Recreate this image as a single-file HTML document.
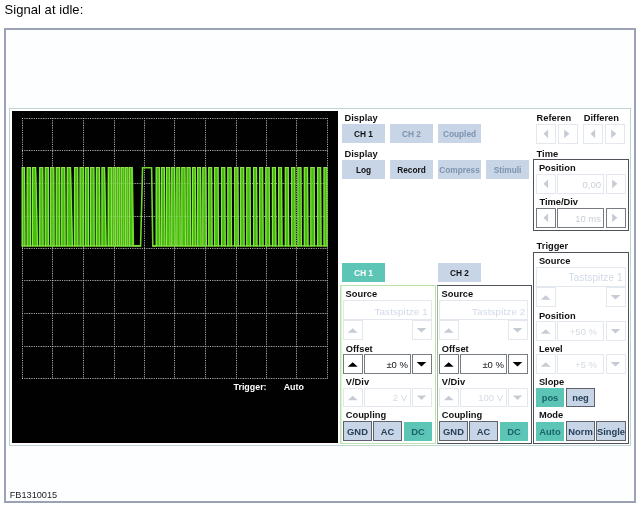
<!DOCTYPE html>
<html><head><meta charset='utf-8'><title>Signal at idle</title>
<style>
html,body{margin:0;padding:0;background:#fff;}
body{width:641px;height:507px;position:relative;overflow:hidden;font-family:"Liberation Sans",sans-serif;}
.a{position:absolute;box-sizing:border-box;}
.t{position:absolute;white-space:nowrap;line-height:1;}
.btn{position:absolute;box-sizing:border-box;font-weight:bold;text-align:center;white-space:nowrap;display:flex;align-items:center;justify-content:center;line-height:1;}
.lt{background:#c7d5e7;}
.teal{background:#5cc5b5;}
.bd{border:1px solid #5d626b;}
.bl{border:1px solid #e3e7ee;background:#fff;}
.bdk{border-color:#777b82;}
.val{position:absolute;box-sizing:border-box;font-weight:bold;text-align:right;white-space:nowrap;}
</style></head>
<body>
<div id='w' style='position:absolute;left:0;top:0;width:641px;height:507px;opacity:0.999;'>
<div class="t" style="left:4.5px;top:3.19px;font-size:13px;color:#000;font-weight:normal;letter-spacing:0.05px;">Signal at idle:</div>
<div class="a " style="left:4px;top:28px;width:632px;height:475px;border:2px solid #9ba2b4;background:#fcfeff;"></div>
<div class="t" style="left:9.7px;top:491.27px;font-size:9.2px;color:#222;font-weight:normal;">FB1310015</div>
<div class="a " style="left:9px;top:108px;width:622px;height:338px;border:1px solid #c2d3d3;background:#fff;"></div>
<div class="a " style="left:12px;top:111px;width:326px;height:332px;background:#000;"></div>
<svg class="a" style="left:0;top:0" width="641" height="507" viewBox="0 0 641 507"><path d="M22.5 118.0 V379.0 M52.5 118.0 V379.0 M83.5 118.0 V379.0 M114.5 118.0 V379.0 M144.5 118.0 V379.0 M174.5 118.0 V379.0 M205.5 118.0 V379.0 M236.5 118.0 V379.0 M266.5 118.0 V379.0 M296.5 118.0 V379.0 M327.5 118.0 V379.0 M22.0 118.5 H328.0 M22.0 150.5 H328.0 M22.0 183.5 H328.0 M22.0 216.5 H328.0 M22.0 248.5 H328.0 M22.0 280.5 H328.0 M22.0 313.5 H328.0 M22.0 346.5 H328.0 M22.0 378.5 H328.0" stroke="#a6a6a6" stroke-width="1" stroke-dasharray="1 1.35" fill="none"/><defs><linearGradient id="ug" x1="0" y1="0" x2="0" y2="1"><stop offset="0" stop-color="#000"/><stop offset="0.12" stop-color="#031000"/><stop offset="0.45" stop-color="#082c00"/><stop offset="1" stop-color="#0b3800"/></linearGradient></defs><path d="M21.7 167.0 H132.2 V246.6 H21.7 Z M155.7 167.0 H204 V246.6 H155.7 Z" fill="url(#ug)"/><path d="M21.7,246.6 L21.7,167.0 L24.9,167.0 L25.45,246.6 Z M26.7,246.6 L26.7,167.0 L31.0,167.0 L31.0,246.6 Z M32.0,246.6 L32.0,167.0 L36.1,167.0 L37.95,246.6 Z M39.2,246.6 L39.2,167.0 L43.2,167.0 L43.55,246.6 Z M44.8,246.6 L44.8,167.0 L48.8,167.0 L48.85,246.6 Z M50.1,246.6 L50.1,167.0 L54.2,167.0 L54.55,246.6 Z M55.8,246.6 L55.8,167.0 L60.1,167.0 L60.1,246.6 Z M61.2,246.6 L61.2,167.0 L65.1,167.0 L65.55,246.6 Z M66.8,246.6 L66.8,167.0 L71.0,167.0 L72.85,246.6 Z M74.1,246.6 L74.1,167.0 L78.1,167.0 L78.35,246.6 Z M79.6,246.6 L79.6,167.0 L83.7,167.0 L83.7,246.6 Z M84.9,246.6 L84.9,167.0 L88.9,167.0 L88.9,246.6 Z M90.0,246.6 L90.0,167.0 L94.3,167.0 L94.65,246.6 Z M95.9,246.6 L95.9,167.0 L99.9,167.0 L100.25,246.6 Z M101.5,246.6 L101.5,167.0 L105.0,167.0 L106.55,246.6 Z M107.8,246.6 L107.8,167.0 L112.0,167.0 L112.0,246.6 Z M112.6,246.6 L112.6,167.0 L116.1,167.0 L116.1,246.6 Z M116.7,246.6 L116.7,167.0 L120.2,167.0 L120.2,246.6 Z M120.8,246.6 L120.8,167.0 L124.4,167.0 L124.4,246.6 Z M125.0,246.6 L125.0,167.0 L128.3,167.0 L128.3,246.6 Z M128.9,246.6 L128.9,167.0 L132.2,167.0 L133.4,246.6 Z M155.7,246.6 L155.7,167.0 L159.8,167.0 L160.3,246.6 Z M160.9,246.6 L160.9,167.0 L164.8,167.0 L165.4,246.6 Z M166.0,246.6 L166.0,167.0 L170.1,167.0 L170.6,246.6 Z M171.2,246.6 L171.2,167.0 L175.1,167.0 L175.7,246.6 Z M176.3,246.6 L176.3,167.0 L180.1,167.0 L180.7,246.6 Z M181.3,246.6 L181.3,167.0 L185.4,167.0 L186.0,246.6 Z M186.6,246.6 L186.6,167.0 L190.6,167.0 L191.2,246.6 Z M192.0,246.6 L192.0,167.0 L195.7,167.0 L196.3,246.6 Z M197.1,246.6 L197.1,167.0 L201.0,167.0 L201.6,246.6 Z M202.3,246.6 L202.3,167.0 L206.3,167.0 L206.9,246.6 Z M208.2,246.6 L208.2,167.0 L212.1,167.0 L212.6,246.6 Z M214.1,246.6 L214.1,167.0 L218.5,167.0 L219.0,246.6 Z M221.0,246.6 L221.0,167.0 L225.2,167.0 L225.7,246.6 Z M227.3,246.6 L227.3,167.0 L231.6,167.0 L232.1,246.6 Z M234.1,246.6 L234.1,167.0 L238.3,167.0 L238.8,246.6 Z M240.1,246.6 L240.1,167.0 L244.1,167.0 L244.6,246.6 Z M246.2,246.6 L246.2,167.0 L250.5,167.0 L251.0,246.6 Z M253.0,246.6 L253.0,167.0 L257.0,167.0 L257.5,246.6 Z M259.1,246.6 L259.1,167.0 L263.1,167.0 L263.6,246.6 Z M265.3,246.6 L265.3,167.0 L269.6,167.0 L270.1,246.6 Z M271.9,246.6 L271.9,167.0 L275.9,167.0 L276.4,246.6 Z M278.1,246.6 L278.1,167.0 L282.0,167.0 L282.5,246.6 Z M284.8,246.6 L284.8,167.0 L288.7,167.0 L289.2,246.6 Z M291.1,246.6 L291.1,167.0 L295.2,167.0 L295.7,246.6 Z M297.4,246.6 L297.4,167.0 L301.4,167.0 L301.9,246.6 Z M303.8,246.6 L303.8,167.0 L308.0,167.0 L308.5,246.6 Z M310.3,246.6 L310.3,167.0 L314.6,167.0 L315.1,246.6 Z M317.1,246.6 L317.1,167.0 L321.1,167.0 L321.6,246.6 Z M323.5,246.6 L323.5,167.0 L327.3,167.0 L327.5,246.6 Z" fill="#40c00c"/><path d="M22.2 246.6 V167.5 H24.5 L25.0 246.6 M27.2 246.6 V167.5 H30.6 L30.55 246.6 M32.5 246.6 V167.5 H35.7 L37.5 246.6 M39.7 246.6 V167.5 H42.800000000000004 L43.1 246.6 M45.3 246.6 V167.5 H48.4 L48.4 246.6 M50.6 246.6 V167.5 H53.800000000000004 L54.1 246.6 M56.3 246.6 V167.5 H59.7 L59.65 246.6 M61.7 246.6 V167.5 H64.69999999999999 L65.1 246.6 M67.3 246.6 V167.5 H70.6 L72.4 246.6 M74.6 246.6 V167.5 H77.69999999999999 L77.9 246.6 M80.1 246.6 V167.5 H83.3 L83.25 246.6 M85.4 246.6 V167.5 H88.5 L88.45 246.6 M90.5 246.6 V167.5 H93.89999999999999 L94.2 246.6 M96.4 246.6 V167.5 H99.5 L99.8 246.6 M102.0 246.6 V167.5 H104.6 L106.1 246.6 M108.3 246.6 V167.5 H111.6 L111.55 246.6 M113.1 246.6 V167.5 H115.69999999999999 L115.65 246.6 M117.2 246.6 V167.5 H119.8 L119.75 246.6 M121.3 246.6 V167.5 H124.0 L123.95 246.6 M125.5 246.6 V167.5 H127.9 L127.85 246.6 M129.4 246.6 V167.5 H131.79999999999998 L132.95 246.6 M156.2 246.6 V167.5 H159.4 L159.85 246.6 M161.4 246.6 V167.5 H164.4 L164.95 246.6 M166.5 246.6 V167.5 H169.7 L170.15 246.6 M171.7 246.6 V167.5 H174.7 L175.25 246.6 M176.8 246.6 V167.5 H179.7 L180.25 246.6 M181.8 246.6 V167.5 H185.0 L185.55 246.6 M187.1 246.6 V167.5 H190.2 L190.75 246.6 M192.5 246.6 V167.5 H195.29999999999998 L195.85 246.6 M197.6 246.6 V167.5 H200.6 L201.15 246.6 M202.8 246.6 V167.5 H205.9 L206.45 246.6 M208.7 246.6 V167.5 H211.7 L212.15 246.6 M214.6 246.6 V167.5 H218.1 L218.55 246.6 M221.5 246.6 V167.5 H224.79999999999998 L225.25 246.6 M227.8 246.6 V167.5 H231.2 L231.65 246.6 M234.6 246.6 V167.5 H237.9 L238.35 246.6 M240.6 246.6 V167.5 H243.7 L244.15 246.6 M246.7 246.6 V167.5 H250.1 L250.55 246.6 M253.5 246.6 V167.5 H256.6 L257.05 246.6 M259.6 246.6 V167.5 H262.70000000000005 L263.15 246.6 M265.8 246.6 V167.5 H269.20000000000005 L269.65 246.6 M272.4 246.6 V167.5 H275.5 L275.95 246.6 M278.6 246.6 V167.5 H281.6 L282.05 246.6 M285.3 246.6 V167.5 H288.3 L288.75 246.6 M291.6 246.6 V167.5 H294.8 L295.25 246.6 M297.9 246.6 V167.5 H301.0 L301.45 246.6 M304.3 246.6 V167.5 H307.6 L308.05 246.6 M310.8 246.6 V167.5 H314.20000000000005 L314.65 246.6 M317.6 246.6 V167.5 H320.70000000000005 L321.15 246.6 M324.0 246.6 V167.5 H326.90000000000003 L327.05 246.6" stroke="#9de455" stroke-width="1.1" fill="none" opacity="0.9"/><path d="M132.2 167.0 L133.4 245.9 H140.6 L142.6 167.7 H151.6 L152.8 245.9 H156" stroke="#6ed62c" stroke-width="1.6" fill="none"/><path d="M21.7 245.9 H141 M152.4 245.9 H327.5" stroke="#86de40" stroke-width="1.4" fill="none"/><path d="M22.5 118.0 V379.0 M52.5 118.0 V379.0 M83.5 118.0 V379.0 M114.5 118.0 V379.0 M144.5 118.0 V379.0 M174.5 118.0 V379.0 M205.5 118.0 V379.0 M236.5 118.0 V379.0 M266.5 118.0 V379.0 M296.5 118.0 V379.0 M327.5 118.0 V379.0 M22.0 118.5 H328.0 M22.0 150.5 H328.0 M22.0 183.5 H328.0 M22.0 216.5 H328.0 M22.0 248.5 H328.0 M22.0 280.5 H328.0 M22.0 313.5 H328.0 M22.0 346.5 H328.0 M22.0 378.5 H328.0" stroke="#d8ffd0" stroke-width="1" stroke-dasharray="1 1" fill="none" opacity="0.22"/></svg>
<div class="t" style="left:233.5px;top:383.32px;font-size:8.9px;color:#fff;font-weight:bold;">Trigger:</div>
<div class="t" style="left:283.7px;top:383.32px;font-size:8.9px;color:#fff;font-weight:bold;">Auto</div>
<div class="t" style="left:344.5px;top:113.95px;font-size:9.3px;color:#111;font-weight:bold;">Display</div>
<div class="btn lt" style="left:342px;top:124px;width:43px;height:19px;color:#111;font-size:8.3px;padding-top:1px;"><span>CH 1</span></div>
<div class="btn lt" style="left:390px;top:124px;width:43px;height:19px;color:#7d93ae;font-size:8.3px;padding-top:1px;"><span>CH 2</span></div>
<div class="btn lt" style="left:438px;top:124px;width:43px;height:19px;color:#7d93ae;font-size:8.3px;padding-top:1px;"><span>Coupled</span></div>
<div class="t" style="left:344.5px;top:149.55px;font-size:9.3px;color:#111;font-weight:bold;">Display</div>
<div class="btn lt" style="left:342px;top:160px;width:43px;height:19px;color:#111;font-size:8.3px;padding-top:1px;"><span>Log</span></div>
<div class="btn lt" style="left:390px;top:160px;width:43px;height:19px;color:#111;font-size:8.3px;padding-top:1px;"><span>Record</span></div>
<div class="btn lt" style="left:438px;top:160px;width:43px;height:19px;color:#7d93ae;font-size:8.3px;padding-top:1px;"><span>Compress</span></div>
<div class="btn lt" style="left:486px;top:160px;width:43px;height:19px;color:#7d93ae;font-size:8.3px;padding-top:1px;"><span>Stimuli</span></div>
<div class="t" style="left:536.6px;top:113.75px;font-size:9.3px;color:#111;font-weight:bold;">Referen</div>
<div class="t" style="left:583.8px;top:113.75px;font-size:9.3px;color:#111;font-weight:bold;">Differen</div>
<div class="a bl" style="left:536px;top:124px;width:20px;height:20px;"></div>
<div class="a bl" style="left:558px;top:124px;width:20px;height:20px;"></div>
<div class="a bl" style="left:583px;top:124px;width:20px;height:20px;"></div>
<div class="a bl" style="left:605px;top:124px;width:20px;height:20px;"></div>
<div class="t" style="left:536.6px;top:149.65px;font-size:9.3px;color:#111;font-weight:bold;">Time</div>
<div class="a " style="left:533px;top:159px;width:96px;height:72px;border:1px solid #4d5158;background:#fff;"></div>
<div class="t" style="left:538.9px;top:164.35px;font-size:9.3px;color:#111;font-weight:bold;">Position</div>
<div class="a bl" style="left:536px;top:174px;width:20px;height:20px;"></div>
<div class="a bl" style="left:557px;top:174px;width:47px;height:20px;"></div>
<div class="t" style="right:40px;top:179.71px;font-size:9.5px;color:#c8ced9;font-weight:normal;">0,00</div>
<div class="a bl" style="left:606px;top:174px;width:20px;height:20px;"></div>
<div class="t" style="left:539.4px;top:198.05px;font-size:9.3px;color:#111;font-weight:bold;">Time/Div</div>
<div class="a bl bdk" style="left:536px;top:208px;width:20px;height:20px;"></div>
<div class="a bl bdk" style="left:557px;top:208px;width:47px;height:20px;"></div>
<div class="t" style="right:40px;top:213.71px;font-size:9.5px;color:#c8ced9;font-weight:normal;">10 ms</div>
<div class="a bl bdk" style="left:606px;top:208px;width:20px;height:20px;"></div>
<div class="t" style="left:536.6px;top:242.05px;font-size:9.3px;color:#111;font-weight:bold;">Trigger</div>
<div class="a " style="left:533px;top:252px;width:96px;height:192px;border:1px solid #4d5158;background:#fff;"></div>
<div class="t" style="left:538.9px;top:256.65px;font-size:9.3px;color:#111;font-weight:bold;">Source</div>
<div class="a bl" style="left:536px;top:267px;width:90px;height:20px;"></div>
<div class="t" style="right:18.4px;top:272.54px;font-size:10px;color:#d2dae8;font-weight:normal;letter-spacing:0.1px;">Tastspitze 1</div>
<div class="a bl" style="left:536px;top:287px;width:20px;height:20px;"></div>
<div class="a bl" style="left:606px;top:287px;width:20px;height:20px;"></div>
<div class="t" style="left:538.9px;top:311.65px;font-size:9.3px;color:#111;font-weight:bold;">Position</div>
<div class="a bl" style="left:536px;top:321px;width:20px;height:20px;"></div>
<div class="a bl" style="left:557px;top:321px;width:47px;height:20px;"></div>
<div class="t" style="right:44px;top:326.71px;font-size:9.5px;color:#d6dae2;font-weight:normal;">+50 %</div>
<div class="a bl" style="left:606px;top:321px;width:20px;height:20px;"></div>
<div class="t" style="left:538.9px;top:344.75px;font-size:9.3px;color:#111;font-weight:bold;">Level</div>
<div class="a bl" style="left:536px;top:354px;width:20px;height:20px;"></div>
<div class="a bl" style="left:557px;top:354px;width:47px;height:20px;"></div>
<div class="t" style="right:44px;top:359.71px;font-size:9.5px;color:#d6dae2;font-weight:normal;">+5 %</div>
<div class="a bl" style="left:606px;top:354px;width:20px;height:20px;"></div>
<div class="t" style="left:538.9px;top:378.05px;font-size:9.3px;color:#111;font-weight:bold;">Slope</div>
<div class="btn teal" style="left:536px;top:388px;width:28px;height:19px;color:#19636c;font-size:9.4px;padding-top:1px;"><span>pos</span></div>
<div class="btn lt bd" style="left:566px;top:388px;width:29px;height:19px;color:#27405a;font-size:9.4px;padding-top:1px;"><span>neg</span></div>
<div class="t" style="left:538.9px;top:411.35px;font-size:9.3px;color:#111;font-weight:bold;">Mode</div>
<div class="btn teal" style="left:536px;top:421.5px;width:28px;height:19.0px;color:#19636c;font-size:9.4px;padding-top:1px;"><span>Auto</span></div>
<div class="btn lt bd" style="left:566px;top:421px;width:29px;height:20px;color:#27405a;font-size:9.4px;padding-top:1px;"><span>Norm</span></div>
<div class="btn lt bd" style="left:596px;top:421px;width:30px;height:20px;color:#27405a;font-size:9.4px;padding-top:1px;"><span>Single</span></div>
<div class="btn teal" style="left:342px;top:263px;width:43px;height:19px;color:#fff;font-size:8.3px;padding-top:1px;"><span>CH 1</span></div>
<div class="a " style="left:339.6px;top:285px;width:96.4px;height:159px;border:1px solid #bbe3ab;box-shadow:inset 1px 0 0 #dcf1d4;background:#fff;"></div>
<div class="t" style="left:345.6px;top:290.05px;font-size:9.3px;color:#111;font-weight:bold;">Source</div>
<div class="a bl" style="left:343px;top:300px;width:89px;height:20px;"></div>
<div class="t" style="right:213.2px;top:306.7px;font-size:9.9px;color:#d2dae8;font-weight:normal;letter-spacing:0.1px;">Tastspitze 1</div>
<div class="a bl" style="left:343px;top:320px;width:20px;height:20px;"></div>
<div class="a bl" style="left:412px;top:320px;width:20px;height:20px;"></div>
<div class="t" style="left:345.8px;top:344.65px;font-size:9.3px;color:#111;font-weight:bold;">Offset</div>
<div class="a bl bdk" style="left:343px;top:354px;width:20px;height:20px;"></div>
<div class="a bl bdk" style="left:364px;top:354px;width:47px;height:20px;"></div>
<div class="t" style="right:233px;top:359.71px;font-size:9.5px;color:#111;font-weight:normal;">&plusmn;0 %</div>
<div class="a bl bdk" style="left:412px;top:354px;width:20px;height:20px;"></div>
<div class="t" style="left:345.8px;top:378.15px;font-size:9.3px;color:#111;font-weight:bold;">V/Div</div>
<div class="a bl" style="left:343px;top:388px;width:20px;height:19px;"></div>
<div class="a bl" style="left:364px;top:388px;width:47px;height:19px;"></div>
<div class="t" style="right:234px;top:393.21px;font-size:9.5px;color:#d6dae2;font-weight:normal;">2 V</div>
<div class="a bl" style="left:412px;top:388px;width:20px;height:19px;"></div>
<div class="t" style="left:345.8px;top:411.45px;font-size:9.3px;color:#111;font-weight:bold;">Coupling</div>
<div class="btn lt bd" style="left:343px;top:421px;width:29px;height:20px;color:#27405a;font-size:9.4px;padding-top:1px;"><span>GND</span></div>
<div class="btn lt bd" style="left:373px;top:421px;width:29px;height:20px;color:#27405a;font-size:9.4px;padding-top:1px;"><span>AC</span></div>
<div class="btn teal" style="left:404px;top:421.5px;width:28px;height:19.0px;color:#19636c;font-size:9.4px;padding-top:1px;"><span>DC</span></div>
<div class="btn lt" style="left:438px;top:263px;width:43px;height:19px;color:#111;font-size:8.3px;padding-top:1px;"><span>CH 2</span></div>
<div class="a " style="left:437px;top:285px;width:95px;height:159px;border:1px solid #4d5158;border-left-color:#9fb89b;background:#fff;"></div>
<div class="t" style="left:441.6px;top:290.05px;font-size:9.3px;color:#111;font-weight:bold;">Source</div>
<div class="a bl" style="left:439px;top:300px;width:89px;height:20px;"></div>
<div class="t" style="right:115.6px;top:306.7px;font-size:9.9px;color:#d2dae8;font-weight:normal;letter-spacing:0.1px;">Tastspitze 2</div>
<div class="a bl" style="left:439px;top:320px;width:20px;height:20px;"></div>
<div class="a bl" style="left:508px;top:320px;width:20px;height:20px;"></div>
<div class="t" style="left:441.8px;top:344.65px;font-size:9.3px;color:#111;font-weight:bold;">Offset</div>
<div class="a bl bdk" style="left:439px;top:354px;width:20px;height:20px;"></div>
<div class="a bl bdk" style="left:460px;top:354px;width:47px;height:20px;"></div>
<div class="t" style="right:137px;top:359.71px;font-size:9.5px;color:#111;font-weight:normal;">&plusmn;0 %</div>
<div class="a bl bdk" style="left:508px;top:354px;width:20px;height:20px;"></div>
<div class="t" style="left:441.8px;top:378.15px;font-size:9.3px;color:#111;font-weight:bold;">V/Div</div>
<div class="a bl" style="left:439px;top:388px;width:20px;height:19px;"></div>
<div class="a bl" style="left:460px;top:388px;width:47px;height:19px;"></div>
<div class="t" style="right:138px;top:393.21px;font-size:9.5px;color:#d6dae2;font-weight:normal;">100 V</div>
<div class="a bl" style="left:508px;top:388px;width:20px;height:19px;"></div>
<div class="t" style="left:441.8px;top:411.45px;font-size:9.3px;color:#111;font-weight:bold;">Coupling</div>
<div class="btn lt bd" style="left:439px;top:421px;width:29px;height:20px;color:#27405a;font-size:9.4px;padding-top:1px;"><span>GND</span></div>
<div class="btn lt bd" style="left:469px;top:421px;width:29px;height:20px;color:#27405a;font-size:9.4px;padding-top:1px;"><span>AC</span></div>
<div class="btn teal" style="left:500px;top:421.5px;width:28px;height:19.0px;color:#19636c;font-size:9.4px;padding-top:1px;"><span>DC</span></div>
<svg class="a" style="left:0;top:0;pointer-events:none" width="641" height="507" viewBox="0 0 641 507"><polygon points="548.0999999999999,129.4 548.0999999999999,138.20000000000002 543.5,133.8" fill="#c6ccd6"/><polygon points="564.1999999999999,129.4 564.1999999999999,138.20000000000002 569.4,133.8" fill="#c6ccd6"/><polygon points="595.0999999999999,129.4 595.0999999999999,138.20000000000002 590.5,133.8" fill="#c6ccd6"/><polygon points="611.1999999999999,129.4 611.1999999999999,138.20000000000002 616.4,133.8" fill="#c6ccd6"/><polygon points="548.0999999999999,179.4 548.0999999999999,188.20000000000002 543.5,183.8" fill="#c6ccd6"/><polygon points="612.1999999999999,179.4 612.1999999999999,188.20000000000002 617.4,183.8" fill="#c6ccd6"/><polygon points="548.0999999999999,213.4 548.0999999999999,222.20000000000002 543.5,217.8" fill="#c6ccd6"/><polygon points="612.1999999999999,213.4 612.1999999999999,222.20000000000002 617.4,217.8" fill="#c6ccd6"/><polygon points="540.7,299.8 550.7,299.8 545.7,295.2" fill="#c6ccd6"/><polygon points="610.7,295.0 620.3,295.0 615.5,299.6" fill="#c6ccd6"/><polygon points="540.7,333.8 550.7,333.8 545.7,329.2" fill="#c6ccd6"/><polygon points="610.7,329.0 620.3,329.0 615.5,333.6" fill="#c6ccd6"/><polygon points="540.7,366.8 550.7,366.8 545.7,362.2" fill="#c6ccd6"/><polygon points="610.7,362.0 620.3,362.0 615.5,366.6" fill="#c6ccd6"/><polygon points="347.7,332.8 357.7,332.8 352.7,328.2" fill="#c6ccd6"/><polygon points="416.7,328.0 426.3,328.0 421.5,332.6" fill="#c6ccd6"/><polygon points="347.7,366.8 357.7,366.8 352.7,362.2" fill="#000"/><polygon points="416.7,362.0 426.3,362.0 421.5,366.6" fill="#000"/><polygon points="347.7,400.3 357.7,400.3 352.7,395.7" fill="#c6ccd6"/><polygon points="416.7,395.5 426.3,395.5 421.5,400.1" fill="#c6ccd6"/><polygon points="443.7,332.8 453.7,332.8 448.7,328.2" fill="#c6ccd6"/><polygon points="512.7,328.0 522.3,328.0 517.5,332.6" fill="#c6ccd6"/><polygon points="443.7,366.8 453.7,366.8 448.7,362.2" fill="#000"/><polygon points="512.7,362.0 522.3,362.0 517.5,366.6" fill="#000"/><polygon points="443.7,400.3 453.7,400.3 448.7,395.7" fill="#c6ccd6"/><polygon points="512.7,395.5 522.3,395.5 517.5,400.1" fill="#c6ccd6"/></svg>
</div>
</body></html>
